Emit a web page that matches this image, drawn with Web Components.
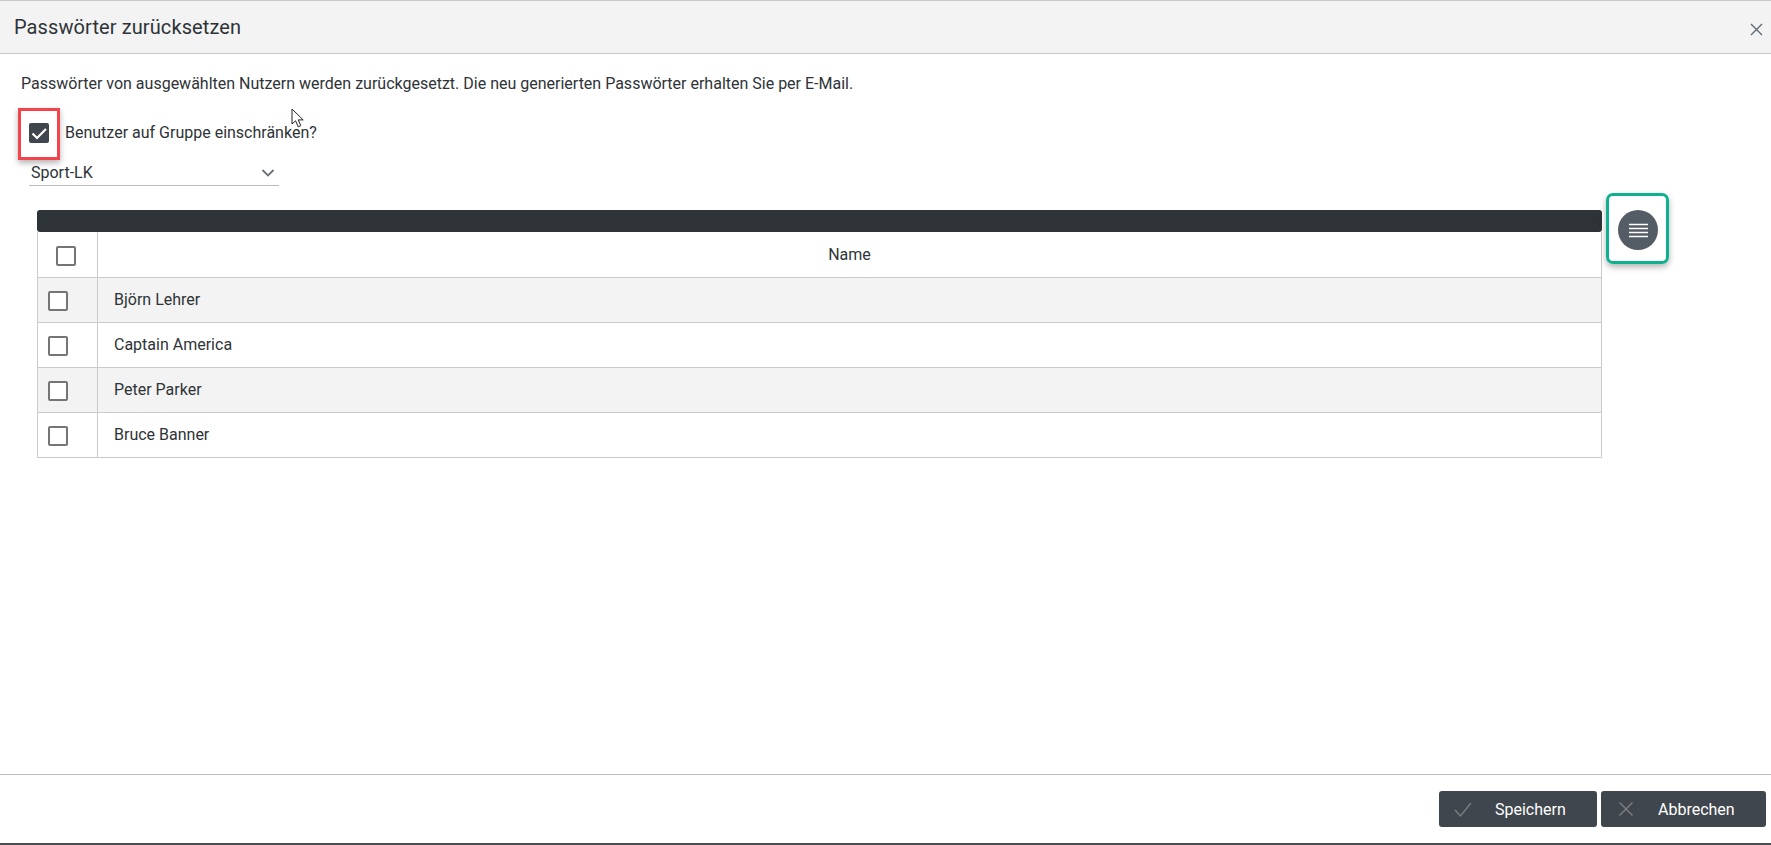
<!DOCTYPE html>
<html lang="de">
<head>
<meta charset="utf-8">
<title>Passwörter zurücksetzen</title>
<style>
  html, body { margin: 0; height: 100%; background: #fff; }
  body { font-family: Roboto, "Liberation Sans", sans-serif; color: #2e3338; overflow: hidden; }
</style>
</head>
<body>
<reset-dialog></reset-dialog>

<script>
const CHECK = '<svg viewBox="0 0 20 20" width="20" height="20"><path d="M3.5 10.5L8 15l9-9" fill="none" stroke="currentColor" stroke-width="2.2"/></svg>';

class UiCheck extends HTMLElement {
  constructor() {
    super();
    this.attachShadow({ mode: 'open' });
    this.shadowRoot.innerHTML = `
      <style>
        :host { display: block; width: 20px; height: 20px; box-sizing: border-box; border: 2px solid #757575; border-radius: 2px; background: #fff; }
        :host([checked]) { border: 0; background: #40464d; color: #fff; }
        svg { display: block; }
      </style>
      ${this.hasAttribute('checked') ? CHECK : ''}
    `;
  }
}

class UiButton extends HTMLElement {
  constructor() {
    super();
    this.attachShadow({ mode: 'open' });
    const icon = this.getAttribute('icon') === 'x'
      ? '<path d="M2.5 2.5l13 13M15.5 2.5l-13 13"/>'
      : '<path d="M1 10l5.5 6L17 3"/>';
    this.shadowRoot.innerHTML = `
      <style>
        :host { display: flex; align-items: center; box-sizing: border-box; height: 36px; background: #40464d; border-radius: 3px; color: #fff; font-size: 16px; padding-left: 15px; }
        svg { width: 18px; height: 18px; fill: none; stroke: #7d7f81; stroke-width: 1.4; flex: none; }
        span { margin-left: 23px; }
      </style>
      <svg viewBox="0 0 18 18">${icon}</svg><span><slot></slot></span>
    `;
  }
}

class UserTable extends HTMLElement {
  constructor() {
    super();
    this.attachShadow({ mode: 'open' });
    const names = ['Björn Lehrer', 'Captain America', 'Peter Parker', 'Bruce Banner'];
    const rows = names.map(n => `
      <div class="row"><div class="sel"><ui-check></ui-check></div><div class="name">${n}</div></div>`).join('');
    this.shadowRoot.innerHTML = `
      <style>
        :host { display: block; width: 1565px; font-size: 16px; }
        .bar { height: 22px; background: #2e3338; border-radius: 3px; }
        .grid { border: solid #cbcbcb; border-width: 0 1px 1px; }
        .row { display: grid; grid-template-columns: 60px 1fr; height: 44px; border-top: 1px solid #cbcbcb; }
        .row:first-child { border-top: 0; height: 45px; }
        .row:nth-child(even) { background: #f3f3f3; }
        .sel { display: flex; align-items: center; padding: 2px 0 0 10px; border-right: 1px solid #cbcbcb; }
        .name { display: flex; align-items: center; padding: 0 0 1px 16px; }
        .head .sel { padding-left: 18px; }
        .head .name { justify-content: center; padding: 0; }
      </style>
      <div class="bar"></div>
      <div class="grid">
        <div class="row head"><div class="sel"><ui-check></ui-check></div><div class="name">Name</div></div>
        ${rows}
      </div>
    `;
  }
}

class GroupSelect extends HTMLElement {
  constructor() {
    super();
    this.attachShadow({ mode: 'open' });
    this.shadowRoot.innerHTML = `
      <style>
        :host { display: flex; align-items: center; justify-content: space-between; box-sizing: border-box; width: 250px; height: 24px; border-bottom: 1px solid #bdbdbd; padding: 0 4px 3px 2px; font-size: 16px; }
        svg { width: 14px; height: 14px; fill: none; stroke: #6d7074; stroke-width: 1.8; }
      </style>
      <slot></slot>
      <svg viewBox="0 0 14 14"><path d="M1.5 5L7 10.5 12.5 5"/></svg>
    `;
  }
}

class ResetDialog extends HTMLElement {
  constructor() {
    super();
    this.attachShadow({ mode: 'open' });
    this.shadowRoot.innerHTML = `
      <style>
        :host { display: flex; flex-direction: column; height: 845px; box-sizing: border-box; border-top: 1px solid #c8c8c8; border-bottom: 2px solid #4a4d50; position: relative; font-size: 16px; }
        header { display: flex; align-items: center; justify-content: space-between; box-sizing: border-box; height: 53px; padding: 0 8px 0 14px; background: #f3f3f3; border-bottom: 1px solid #c8c8c8; }
        h1 { margin: 0; font-size: 20px; font-weight: 400; letter-spacing: .1px; }
        header svg { width: 13px; height: 13px; margin-top: 5px; fill: none; stroke: #5f6a75; stroke-width: 1.4; }
        main { flex: 1; display: flex; flex-direction: column; align-items: flex-start; padding: 21px 0 0 21px; }
        p { margin: 0; line-height: 18px; }
        .limit { display: flex; align-items: center; gap: 16px; margin: 30px 0 0 8px; height: 20px; }
        .limit span { padding-bottom: 2px; }
        group-select { margin: 19px 0 0 8px; }
        user-table { margin: 24px 0 0 16px; }
        .table-wrap { display: flex; align-items: flex-start; }
        .fab { width: 40px; height: 40px; border-radius: 50%; background: #545d66; margin: 24px 0 0 16px; display: flex; align-items: center; justify-content: center; }
        .fab svg { width: 19px; height: 15px; stroke: #fff; stroke-width: 1.5; fill: none; }
        footer { display: flex; justify-content: flex-end; gap: 4px; height: 69px; box-sizing: border-box; border-top: 1px solid #bdbdbd; padding: 16px 5px 0 0; }
        footer ui-button:first-child { width: 158px; }
        footer ui-button:last-child { width: 165px; padding-left: 16px; }
        .mark { position: absolute; box-sizing: border-box; border-width: 3px; border-style: solid; background: transparent; box-shadow: 0 3px 6px rgba(0,0,0,.3); pointer-events: none; }
        .red { left: 18px; top: 107px; width: 42px; height: 52px; border-color: #f1444d; }
        .green { left: 1606px; top: 192px; width: 63px; height: 71px; border-color: #0db18e; border-radius: 7px; }
        .cursor { position: absolute; left: 291px; top: 107px; width: 14px; height: 21px; }
      </style>
      <header>
        <h1>Passwörter zurücksetzen</h1>
        <svg viewBox="0 0 13 13"><path d="M1 1l11 11M12 1L1 12"/></svg>
      </header>
      <main>
        <p>Passwörter von ausgewählten Nutzern werden zurückgesetzt. Die neu generierten Passwörter erhalten Sie per E-Mail.</p>
        <div class="limit"><ui-check checked></ui-check><span>Benutzer auf Gruppe einschränken?</span></div>
        <group-select>Sport-LK</group-select>
        <div class="table-wrap">
          <user-table></user-table>
          <div class="fab"><svg viewBox="0 0 19 15"><path d="M0 1.5h19M0 5.5h19M0 9.5h19M0 13.5h19"/></svg></div>
        </div>
      </main>
      <footer>
        <ui-button icon="check">Speichern</ui-button>
        <ui-button icon="x">Abbrechen</ui-button>
      </footer>
      <div class="mark red"></div>
      <div class="mark green"></div>
      <svg class="cursor" viewBox="0 0 14 21"><path d="M1 1v15l3.6-3.2 2.6 6 2.6-1.1-2.6-5.8h5z" fill="#fff" stroke="#222" stroke-width="1"/></svg>
    `;
  }
}

customElements.define('ui-check', UiCheck);
customElements.define('ui-button', UiButton);
customElements.define('user-table', UserTable);
customElements.define('group-select', GroupSelect);
customElements.define('reset-dialog', ResetDialog);
</script>
</body>
</html>
